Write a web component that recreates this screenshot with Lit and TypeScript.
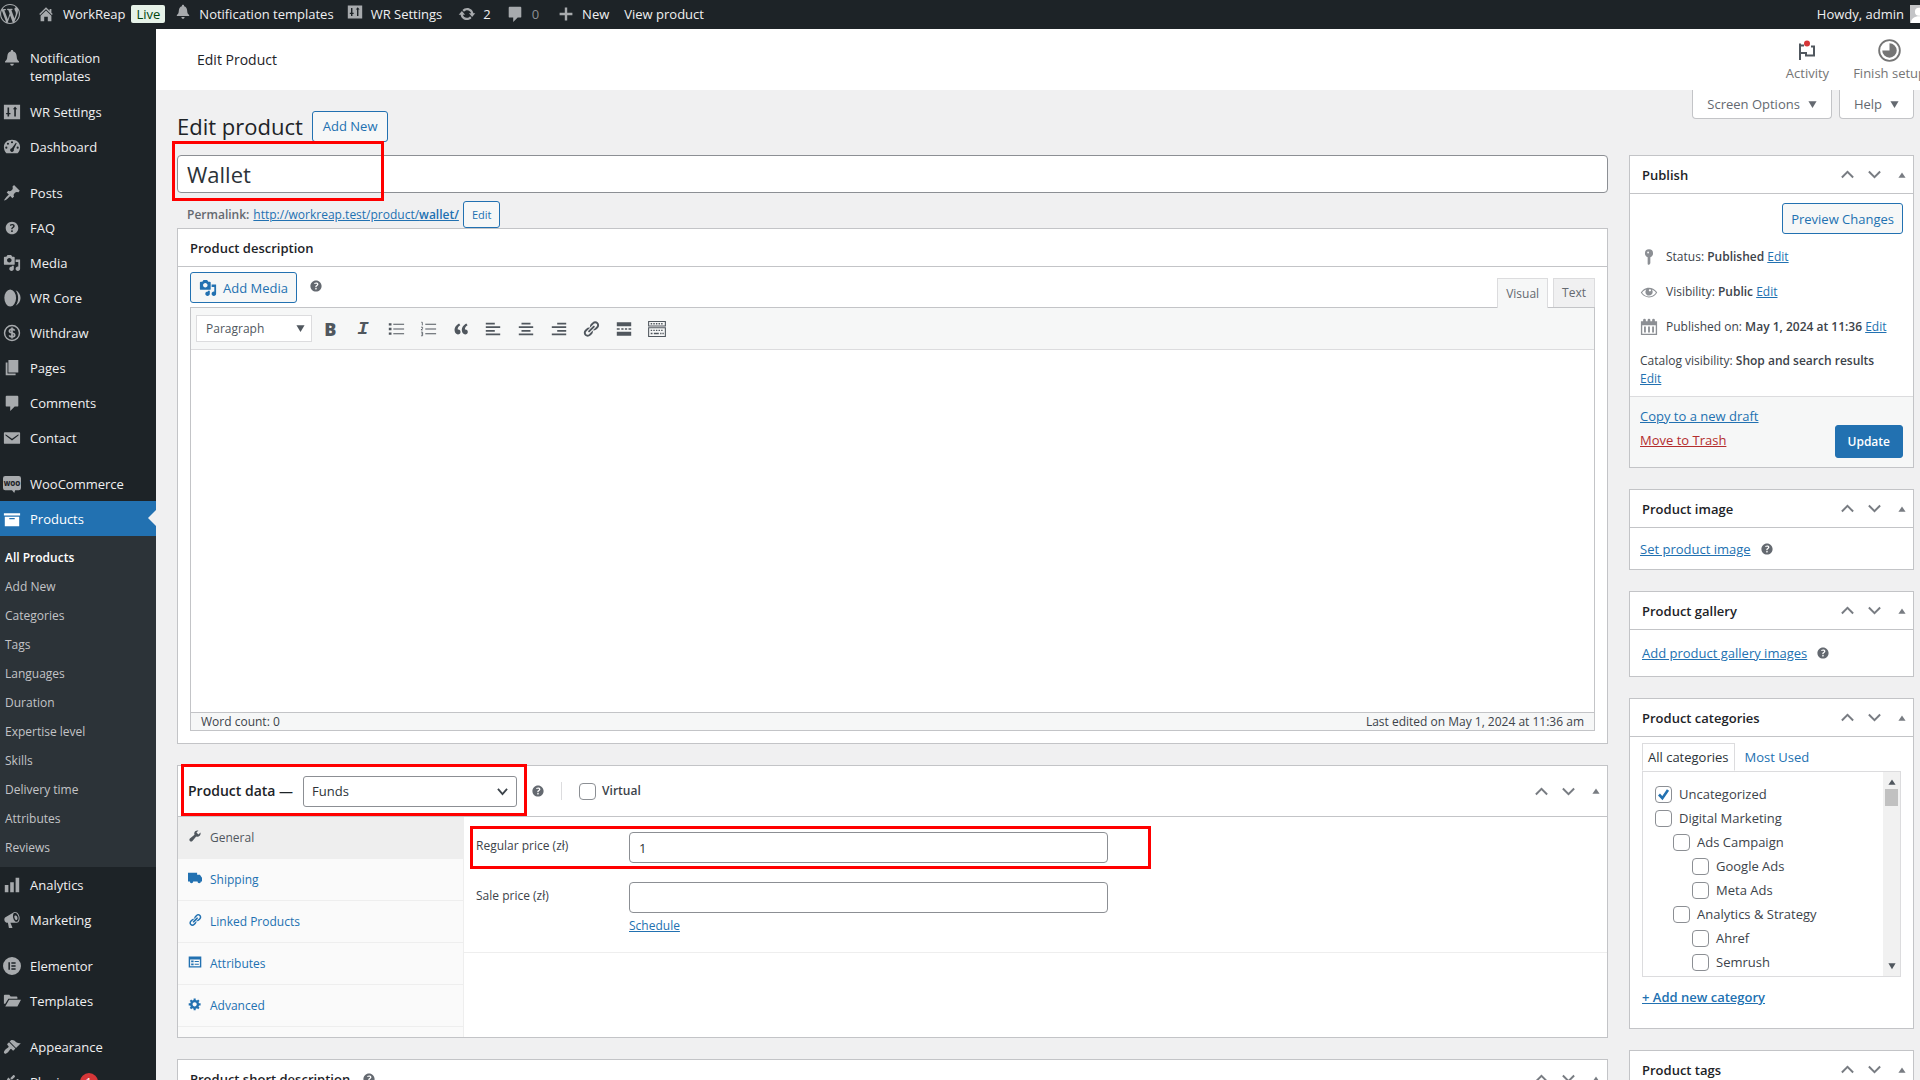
import { LitElement, html, css, svg, nothing, TemplateResult } from "lit";
import { customElement, property, state } from "lit/decorators.js";
import { classMap } from "lit/directives/class-map.js";

const ICONS: Record<string, TemplateResult | unknown> = {
  wordpress: svg`<path d="M20 10c0-5.51-4.49-10-10-10C4.48 0 0 4.49 0 10c0 5.52 4.48 10 10 10 5.51 0 10-4.48 10-10zM7.78 15.37L4.37 6.22c.55-.02 1.17-.08 1.17-.08.5-.06.44-1.13-.06-1.11 0 0-1.45.11-2.37.11-.18 0-.37 0-.58-.01C4.12 2.69 6.87 1.11 10 1.11c2.33 0 4.45.87 6.05 2.34-.68-.11-1.65.39-1.65 1.58 0 .74.45 1.36.9 2.1.35.61.55 1.36.55 2.46 0 1.49-1.4 5-1.4 5l-3.03-8.37c.54-.02.82-.17.82-.17.5-.05.44-1.25-.06-1.22 0 0-1.44.12-2.38.12-.87 0-2.33-.12-2.33-.12-.5-.03-.56 1.2-.06 1.22l.92.08 1.26 3.41zM17.41 10c.24-.64.74-1.87.43-4.25.7 1.29 1.05 2.71 1.05 4.25 0 3.29-1.73 6.24-4.4 7.78.97-2.59 1.94-5.2 2.92-7.78zM6.1 18.09C3.12 16.65 1.11 13.53 1.11 10c0-1.3.23-2.48.72-3.59C3.25 10.3 4.67 14.2 6.1 18.09zm4.03-6.63l2.58 6.98c-.86.29-1.76.45-2.71.45-.79 0-1.57-.11-2.29-.33.81-2.38 1.62-4.74 2.42-7.1z"/>`,
  home: svg`<path d="M16 8.5l1.53 1.53-1.06 1.06L10 4.6l-6.47 6.47-1.06-1.06L10 2.5l4 4v-2h2v4zm-6-2.46l6 5.99V18h-4v-5H8v5H4v-5.97z"/>`,
  bell: svg`<path d="M10 1c.8 0 1.4.6 1.4 1.4v.5c2.3.6 3.6 2.5 3.8 5.1.2 3.2.9 4.6 2.5 5.7V15H2.3v-1.3c1.6-1.1 2.3-2.5 2.5-5.7.2-2.6 1.5-4.5 3.8-5.1v-.5C8.6 1.6 9.2 1 10 1zM8 16.300h4c0 1.300-.8 2.200-2 2.200s-2-.9-2-2.200z"/>`,
  sliders: svg`<path fill-rule="evenodd" d="M1 2h18v16H1zM5 5v6H3.500v1.500H5V15h1.800v-2.500h1.500V11H6.800V5zm7.500 0v2H11l2.400-3 2.400 3h-1.500v8h-1.800z"/>`,
  update: svg`<path d="M10.2 3.28c3.53 0 6.43 2.61 6.92 6h2.08l-3.5 4-3.5-4h2.32c-.45-1.97-2.21-3.45-4.32-3.45-1.45 0-2.73.71-3.54 1.78L4.95 5.66C6.23 4.2 8.11 3.28 10.2 3.28zm-.4 13.44c-3.52 0-6.43-2.61-6.92-6H.8l3.5-4c1.17 1.33 2.33 2.67 3.5 4H5.48c.45 1.97 2.21 3.45 4.32 3.45 1.45 0 2.73-.71 3.54-1.78l1.71 1.95c-1.28 1.46-3.15 2.38-5.25 2.38z"/>`,
  comment: svg`<path d="M4 2h12c.6 0 1 .4 1 1v10c0 .6-.4 1-1 1h-3l-5 5v-5H4c-.6 0-1-.4-1-1V3c0-.6.4-1 1-1z"/>`,
  plus: svg`<path d="M18 8.500v3h-6.500V18h-3v-6.500H2v-3h6.500V2h3v6.500z"/>`,
  gauge: svg`<path fill-rule="evenodd" d="M3.760 17h12.480C17.960 15.210 19 12.790 19 10.120 19 5 15 2 10 2S1 5 1 10.120C1 12.790 2.040 15.210 3.760 17zM10 3.500a1.200 1.200 0 1 1 0 2.400 1.200 1.200 0 0 1 0-2.400zM5.500 5.200a1.200 1.200 0 1 1 0 2.400 1.200 1.200 0 0 1 0-2.400zM14.300 5.200l.9.7-3.200 6.700c.5 1.500-.5 2.900-2 2.900s-2.500-1.500-1.900-2.900c.3-.8.9-1.200 1.700-1.300zM3.700 9.500a1.200 1.200 0 1 1 0 2.400 1.200 1.200 0 0 1 0-2.400zM16.300 9.500a1.200 1.200 0 1 1 0 2.400 1.200 1.200 0 0 1 0-2.400z"/>`,
  pin: svg`<path d="M10.44 3.02l1.82-1.82 6.36 6.35-1.83 1.82c-1.05-.68-2.48-.57-3.41.36l-.75.75c-.92.93-1.04 2.35-.35 3.41l-1.83 1.82-2.41-2.41-2.8 2.79c-.42.42-3.38 2.71-3.8 2.29s1.86-3.39 2.28-3.81l2.79-2.79L4.1 9.36l1.83-1.82c1.05.69 2.48.57 3.4-.36l.75-.75c.93-.92 1.05-2.35.36-3.41z"/>`,
  help: svg`<path d="M17 10c0-3.87-3.14-7-7-7-3.87 0-7 3.13-7 7s3.13 7 7 7c3.86 0 7-3.13 7-7zm-6.3 1.48H9.14v-.43c0-.38.08-.7.24-.98s.46-.57.88-.89c.41-.29.68-.53.81-.71.14-.18.2-.39.2-.62 0-.25-.09-.44-.28-.58-.19-.13-.45-.19-.79-.19-.58 0-1.25.19-2 .57l-.64-1.28c.87-.49 1.8-.74 2.77-.74.81 0 1.45.2 1.92.58.48.39.71.91.71 1.55 0 .43-.09.8-.29 1.11-.19.32-.57.67-1.11 1.06-.38.28-.61.49-.71.63-.1.15-.15.34-.15.57v.35zm-1.47 2.74c-.18-.17-.27-.42-.27-.73 0-.33.08-.58.26-.75s.43-.25.77-.25c.32 0 .57.09.75.26s.27.42.27.74c0 .3-.09.55-.27.72-.18.18-.43.27-.75.27-.33 0-.58-.09-.76-.26z"/>`,
  media: svg`<path d="M13 11V4c0-.55-.45-1-1-1h-1.67L9 1H5L3.67 3H2c-.55 0-1 .45-1 1v7c0 .55.45 1 1 1h10c.55 0 1-.45 1-1zM7 4.5c1.38 0 2.5 1.12 2.5 2.5S8.38 9.5 7 9.5 4.5 8.38 4.5 7 5.62 4.5 7 4.5zM14 6h5v10.5c0 1.38-1.12 2.5-2.5 2.5S14 17.88 14 16.5s1.12-2.5 2.5-2.5c.17 0 .34.02.5.05V9h-3V6zm-4 8.05V13h2v3.5c0 1.38-1.12 2.5-2.5 2.5S7 17.88 7 16.5 8.12 14 9.5 14c.17 0 .34.02.5.05z"/>`,
  core: svg`<ellipse cx="8" cy="10" rx="6.500" ry="9.500"/><path d="M14 1.500c3.500 1.500 5.500 5 5.500 8.500s-2 7-5.500 8.500c2-2.500 2.800-5.500 2.800-8.500s-.8-6-2.800-8.500z"/>`,
  dollar: svg`<circle cx="10" cy="10" r="8.300" fill="none" stroke="currentColor" stroke-width="1.600"/><path d="M12.900 7.300c-.5-1-1.500-1.500-2.900-1.500-1.600 0-2.900.7-2.900 2s1.200 1.800 2.900 2.200 3 .9 3 2.200-1.300 2.100-3 2.100c-1.500 0-2.600-.6-3.100-1.700M10 3.800v12.400" fill="none" stroke="currentColor" stroke-width="1.900"/>`,
  pages: svg`<path d="M6 15V1h11v14H6zm-1 1h9v2H3V4h2v12z"/>`,
  mail: svg`<path d="M2 3.500h16c.6 0 1 .4 1 1v11c0 .6-.4 1-1 1H2c-.6 0-1-.4-1-1v-11c0-.6.4-1 1-1zm.8 2.200v1.600l7.200 5.500 7.200-5.500V5.700L10 10.800z"/>`,
  woo: svg`<path d="M2.500 1h15A2.500 2.500 0 0 1 20 3.500v11a2.500 2.500 0 0 1-2.500 2.500H13.500l-1 3-2.500-3h-7.500A2.500 2.500 0 0 1 0 14.500v-11A2.500 2.500 0 0 1 2.500 1z"/><text x="10" y="12" text-anchor="middle" font-size="7" font-weight="800" fill="#1d2327">WOO</text>`,
  archive: svg`<path d="M19 3.500v2.500H1V3.500zM2 7.500h16V18H2zm11 2.700V9H7v1.200z"/>`,
  chart: svg`<path d="M18 18V2h-4v16h4zm-6 0V7H8v11h4zm-6 0v-8H2v8h4z"/>`,
  megaphone: svg`<path fill-rule="evenodd" d="M18.15 5.94c.46 1.62.38 3.22-.02 4.48-.42 1.28-1.26 2.18-2.3 2.48-.16.06-.26.06-.4.06h-7.200l2.22 5.500c.02.14-.06.26-.14.34-.08.1-.24.16-.34.16H6.950c-.1 0-.26-.06-.34-.16-.08-.08-.16-.2-.14-.34l-1-5.500H4.250c-.5.06-1.080-.18-1.540-.62s-.88-1.080-1.060-1.880c-.24-.8-.2-1.560-.02-2.200.18-.62.58-1.080 1.060-1.300l9.020-5.420c.1-.06.18-.1.24-.16.220-.160.500-.240.740-.300 1.040-.3 2.240.1 3.220.98s1.840 2.240 2.260 3.860zm-2.580 5.980c.4-.1.74-.34 1.040-.7.58-.7.86-1.760.86-3.040 0-.64-.1-1.300-.28-1.980-.34-1.360-1.020-2.500-1.780-3.240s-1.680-1.100-2.460-.88c-.82.22-1.400.96-1.700 2-.32 1.040-.28 2.360.06 3.720.38 1.360 1 2.500 1.800 3.240.78.74 1.600 1.100 2.460.88zM13.500 5c1.200-.3 2.200.8 2.500 2.100.3 1.200 0 2.600-1.100 2.900s-1.800-1.200-2.100-2.400-.4-2.300.7-2.600z"/>`,
  elementor: svg`<path fill-rule="evenodd" d="M10 0a10 10 0 1 0 0 20 10 10 0 0 0 0-20zM6 5.800h1.700v8.400H6zM9.300 5.800H14v1.700H9.300zM9.300 9.200H14v1.700H9.300zM9.300 12.500H14v1.700H9.300z"/>`,
  folder: svg`<path d="M1 4c0-.6.4-1 1-1h5l1.500 2H15c.6 0 1 .4 1 1v1.500H6L2.500 13H1zM6.800 8.600H20L16 16H2.500z"/>`,
  brush: svg`<path d="M14.48 11.06L7.41 3.99l1.5-1.5c.5-.56 2.3-.47 3.51.32 1.21.8 1.43 1.28 2.91 2.1 1.18.64 2.45 1.26 4.45.85zm-.71.71L6.7 4.7 4.93 6.47c-.39.39-.39 1.02 0 1.41l1.06 1.06c.39.39.39 1.03 0 1.42-.6.6-1.43 1.11-2.21 1.69-.35.26-.7.53-1.01.84C1.43 14.23.4 16.08 1.4 17.07c.99 1 2.84-.03 4.18-1.36.31-.31.58-.66.85-1.02.57-.78 1.08-1.61 1.69-2.21.39-.39 1.02-.39 1.41 0l1.06 1.06c.39.39 1.02.39 1.41 0z"/>`,
  plug: svg`<path d="M13.110 4.360L9.870 7.600 8 5.730l3.240-3.240c.35-.34 1.050-.2 1.560.32.52.51.66 1.210.31 1.550zM5.100 6.100l.9-1.100 9 9-1.200.9c-2 1.700-5 1.700-7 .3L3 19l-1.500-1.500L5 14c-1.500-2.200-1.600-5.600.1-7.900zm12.400 2.600l-3.200 3.200-1.900-1.800 3.300-3.300c.3-.3 1-.2 1.500.3s.7 1.200.3 1.600z"/>`,
  wrench: svg`<path d="M16.68 9.77c-1.34 1.34-3.3 1.67-4.95.99l-5.41 6.52c-.99.99-2.59.99-3.58 0s-.99-2.59 0-3.57l6.52-5.42c-.68-1.65-.35-3.61.99-4.95 1.28-1.28 3.12-1.62 4.72-1.06l-2.89 2.89 2.82 2.82 2.86-2.87c.53 1.58.18 3.39-1.08 4.65z"/>`,
  truck: svg`<path d="M0 2.500h13v3h4L20 9.500V15h-1.600a2.400 2.400 0 0 1-4.800 0H7.400a2.400 2.400 0 0 1-4.800 0H0z"/>`,
  link: svg`<path d="M17.74 2.76c1.68 1.69 1.68 4.41 0 6.1l-1.53 1.52c-1.12 1.12-2.7 1.47-4.14 1.09l2.62-2.61.76-.77.76-.76c.84-.84.84-2.2 0-3.04-.84-.85-2.2-.85-3.04 0l-.77.76-3.38 3.38c-.37-1.44-.02-3.02 1.1-4.14l1.52-1.53c1.69-1.68 4.42-1.68 6.1 0zM8.59 13.43l5.34-5.34c.42-.42.42-1.1 0-1.52-.44-.43-1.13-.39-1.53 0l-5.33 5.34c-.42.42-.42 1.1 0 1.52.44.43 1.13.39 1.52 0zm-.76 2.29l4.14-4.15c.38 1.44.03 3.02-1.09 4.14l-1.52 1.53c-1.69 1.68-4.41 1.68-6.1 0-1.68-1.68-1.68-4.42 0-6.1l1.53-1.52c1.12-1.12 2.7-1.47 4.14-1.1l-4.14 4.15c-.85.84-.85 2.2 0 3.05.84.84 2.2.84 3.04 0z"/>`,
  list: svg`<path fill-rule="evenodd" d="M1 2h18v16H1zM3 6.500v9.500h14V6.500zM4.500 8H8v2.500H4.500zM4.500 12H8v2.500H4.500zM9.500 8.500h6V10h-6zM9.500 12.500h6V14h-6z"/>`,
  gear: svg`<path d="M18 12h-2.18c-.17.7-.44 1.35-.81 1.93l1.54 1.54-2.1 2.1-1.54-1.54c-.58.36-1.23.63-1.91.79V19H8v-2.18c-.68-.16-1.33-.43-1.91-.79l-1.54 1.54-2.12-2.12 1.54-1.54c-.36-.58-.63-1.23-.79-1.91H1V9.03h2.17c.16-.7.44-1.35.8-1.94L2.43 5.55l2.1-2.1 1.54 1.54c.58-.37 1.24-.64 1.93-.81V2h3v2.18c.68.16 1.33.43 1.91.79l1.54-1.54 2.12 2.12-1.54 1.54c.36.59.64 1.24.8 1.94H18V12zm-8.5 1.5c1.66 0 3-1.34 3-3s-1.34-3-3-3-3 1.34-3 3 1.34 3 3 3z"/>`,
  status: svg`<path fill-rule="evenodd" d="M14.500 6c0 2-1.200 3.600-3 4.200V17L10 19l-1.500-1V10.200C6.700 9.600 5.500 8 5.500 6a4.500 4.500 0 0 1 9 0zM8 5c0 .6.400 1 1 1s1-.4 1-1-.4-1-1-1-1 .4-1 1z"/>`,
  eye: svg`<path d="M18.300 9.500C15 4.900 8.500 3.800 3.900 7.200c-1.200.9-2.200 2.100-3 3.400.2.4.5.8.8 1.200 3.300 4.600 9.600 5.600 14.200 2.400.9-.7 1.700-1.400 2.400-2.400.3-.4.5-.8.8-1.200-.3-.4-.5-.8-.8-1.100zm-8.200-2.300c.5-.5 1.300-.5 1.800 0s.5 1.300 0 1.800-1.300.5-1.800 0-.5-1.300 0-1.800zm-.1 7.700c-3.100 0-6-1.600-7.700-4.200C3.500 9 5.100 7.800 7 7.200c-.7.8-1 1.700-1 2.700 0 2.200 1.700 4.100 4 4.100 2.200 0 4.100-1.700 4.100-4v-.1c0-1-.4-2-1.100-2.700 1.900.6 3.500 1.800 4.700 3.500-1.700 2.600-4.600 4.200-7.700 4.200z"/>`,
  calendar: svg`<path fill-rule="evenodd" d="M1 3.500h2.500V2.200a1.500 1.500 0 0 1 3 0v1.300h2V2.200a1.500 1.500 0 0 1 3 0v1.300h2V2.200a1.500 1.500 0 0 1 3 0v1.300H19V19H1zM2.500 8v9.500h15V8zM4.500 9.500h2V16h-2zM9 9.500h2V16H9zM13.500 9.500h2V16h-2z"/>`,
  ul: svg`<path d="M2 3.500h3v2.600H2zM2 8.700h3v2.600H2zM2 13.900h3v2.600H2zM7 4.200h12v1.200H7zM7 9.400h12v1.200H7zM7 14.600h12v1.200H7z"/>`,
  ol: svg`<path d="M7 4.200h12v1.200H7zM7 9.400h12v1.200H7zM7 14.600h12v1.200H7z"/><path d="M2.500 2.500h1.200v3.500M2.200 8h1.800v1.500l-1.800 1.500h2M2.200 13.500h1.800v4H2.200M2.500 15.500H4" fill="none" stroke="currentColor" stroke-width=".9"/>`,
  quote: svg`<path d="M9.49 13.22c0-.74-.2-1.38-.61-1.9-.62-.78-1.83-.88-2.53-.72-.29-1.65 1.11-3.75 2.92-4.65L7.88 4c-2.73 1.3-5.42 4.28-4.96 8.05C3.21 14.43 4.59 16 6.54 16c.85 0 1.56-.25 2.12-.75s.83-1.18.83-2.03zm8.05 0c0-.74-.2-1.38-.61-1.9-.63-.78-1.83-.88-2.53-.72-.29-1.65 1.11-3.75 2.92-4.65L15.93 4c-2.73 1.3-5.41 4.28-4.95 8.05.29 2.38 1.66 3.95 3.61 3.95.85 0 1.56-.25 2.12-.75s.83-1.18.83-2.03z"/>`,
  left: svg`<path d="M2 3h10v2H2zM2 7h16v2H2zM2 11h10v2H2zM2 15h16v2H2z"/>`,
  center: svg`<path d="M5 3h10v2H5zM2 7h16v2H2zM5 11h10v2H5zM2 15h16v2H2z"/>`,
  right: svg`<path d="M8 3h10v2H8zM2 7h16v2H2zM8 11h10v2H8zM2 15h16v2H2z"/>`,
  more: svg`<path d="M2 2.500h16V7H2zM2 13h16v4.500H2zM2 9.200h3.200v1.600H2zM7 9.200h2.500v1.600H7zM11 9.200h2.500v1.600H11zM15 9.200h3v1.600h-3z"/>`,
  keyboard: svg`<path d="M.7 1.700h18.600v5H.7zM.7 8.700h18.600v9.600H.7z" fill="none" stroke="currentColor" stroke-width="1.200"/><path d="M3 4.200h14M3 11.500h14" fill="none" stroke="currentColor" stroke-width="1.600" stroke-dasharray="1.600 1.300"/><path d="M3 15h2M6.500 15h5.500M13.500 15h1.500M16 15h1.500" stroke="currentColor" stroke-width="1.800"/>`,
  up: svg`<path d="M2.500 14l7.500-7.500 7.500 7.500" fill="none" stroke="currentColor" stroke-width="2.600"/>`,
  down: svg`<path d="M2.500 6l7.500 7.500L17.500 6" fill="none" stroke="currentColor" stroke-width="2.600"/>`,
  toggle: svg`<path d="M1 17L10 4l9 13z"/>`,
  caret: svg`<path d="M1 3h18l-9 15z"/>`,
  chevron: svg`<path d="M3 6l7 8 7-8" fill="none" stroke="currentColor" stroke-width="2.800"/>`,
  flag: svg`<path d="M3 19.500V3M3 12.500h6V15h8V6h-3M3 5h4" fill="none" stroke="currentColor" stroke-width="2"/><circle cx="10" cy="3" r="3" fill="#d63638"/>`,
  progress: svg`<circle cx="10" cy="10" r="9" fill="none" stroke="currentColor" stroke-width="1.600"/><path d="M10 3.700A6.300 6.300 0 1 1 3.700 10H10z"/>`,
  person: svg`<rect width="20" height="20" fill="#c3c4c7"/><circle cx="10" cy="7.500" r="4.500" fill="#fff"/><path d="M1 20c0-5 4-7.500 9-7.500s9 2.500 9 7.500z" fill="#fff"/>`,
};

@customElement("wp-icon")
export class WpIcon extends LitElement {
  @property() name = "";
  static styles = css`
    :host { display: inline-flex; flex: none; width: 18px; height: 18px; }
    .glyph { display: block; width: 100%; height: 100%; fill: currentColor; font-family: "Open Sans", sans-serif; }
  `;
  render() {
    return html`<svg class="glyph" viewBox="0 0 20 20" aria-hidden="true">${ICONS[this.name]}</svg>`;
  }
}

interface MenuEntry { icon: string; label: string; gap?: boolean; badge?: number; }

const MENU_TOP: MenuEntry[] = [
  { icon: "bell", label: "Notification templates" },
  { icon: "sliders", label: "WR Settings" },
  { icon: "gauge", label: "Dashboard" },
  { icon: "pin", label: "Posts", gap: true },
  { icon: "help", label: "FAQ" },
  { icon: "media", label: "Media" },
  { icon: "core", label: "WR Core" },
  { icon: "dollar", label: "Withdraw" },
  { icon: "pages", label: "Pages" },
  { icon: "comment", label: "Comments" },
  { icon: "mail", label: "Contact" },
  { icon: "woo", label: "WooCommerce", gap: true },
  { icon: "archive", label: "Products" },
];
const SUBMENU = ["All Products", "Add New", "Categories", "Tags", "Languages", "Duration", "Expertise level", "Skills", "Delivery time", "Attributes", "Reviews"];
const MENU_BOTTOM: MenuEntry[] = [
  { icon: "chart", label: "Analytics" },
  { icon: "megaphone", label: "Marketing" },
  { icon: "elementor", label: "Elementor", gap: true },
  { icon: "folder", label: "Templates" },
  { icon: "brush", label: "Appearance", gap: true },
  { icon: "plug", label: "Plugins", badge: 1 },
];
const DATA_TABS = [
  { icon: "wrench", label: "General" },
  { icon: "truck", label: "Shipping" },
  { icon: "link", label: "Linked Products" },
  { icon: "list", label: "Attributes" },
  { icon: "gear", label: "Advanced" },
];
const TOOLS = [
  ["ul", "Bulleted list"], ["ol", "Numbered list"], ["quote", "Blockquote"], ["left", "Align left"], ["center", "Align center"],
  ["right", "Align right"], ["link", "Insert link"], ["more", "Read more tag"], ["keyboard", "Toolbar toggle"],
];
const CATEGORIES = [
  { label: "Uncategorized", level: 0, checked: true },
  { label: "Digital Marketing", level: 0 },
  { label: "Ads Campaign", level: 1 },
  { label: "Google Ads", level: 2 },
  { label: "Meta Ads", level: 2 },
  { label: "Analytics & Strategy", level: 1 },
  { label: "Ahref", level: 2 },
  { label: "Semrush", level: 2 },
];

@customElement("app-root")
export class AppRoot extends LitElement {
  @state() private tab = "General";

  static styles = css`
    :host {
      display: flex; flex-direction: column; height: 100vh; overflow: hidden;
      background: #f0f0f1; color: #3c434a;
      font: 13px/18px "Open Sans", "Noto Sans", sans-serif;
    }
    * { box-sizing: border-box; }
    h1, h2, ul, p { margin: 0; padding: 0; font-size: inherit; font-weight: inherit; }
    ul { list-style: none; }
    a { color: #2271b1; }
    button, input, select { font: inherit; color: inherit; margin: 0; }
    button { padding: 0; border: 0; background: none; cursor: pointer; }
    strong { font-weight: 600; }

    .bar { display: flex; align-items: center; flex: none; height: 29px; background: #1d2327; color: #f0f0f1; padding: 0 0 2px 0; white-space: nowrap; }
    .bar a { display: flex; align-items: center; color: inherit; text-decoration: none; }
    .bar wp-icon { color: #a7aaad; }
    .bar .i20 { width: 20px; height: 20px; }
    .bar .i16 { width: 16px; height: 16px; }
    .bar .lift { width: 16px; height: 16px; margin-bottom: 4px; }
    .site { gap: 8px; margin-left: 17px; }
    .bar .live { margin-left: 6px; padding: 0 5px; border-radius: 2px; background: #e6f2e8; color: #00450c; }
    .templates { gap: 8px; margin-left: 10px; }
    .settings { gap: 8px; margin-left: 13px; }
    .updates { gap: 7px; margin-left: 16px; }
    .replies { gap: 8px; margin-left: 15px; }
    .replies span { color: #8c8f94; }
    .new { gap: 8px; margin-left: 19px; }
    .view { margin-left: 15px; }
    .howdy { gap: 6px; margin-left: auto; margin-right: -8px; }

    .shell { display: flex; flex: 1; min-height: 0; }
    .menu { flex: none; width: 156px; padding-top: 11px; background: #1d2327; overflow: hidden; }
    .menu a { text-decoration: none; }
    .item { display: flex; gap: 8px; padding: 9px 16px 8px 3px; color: #f0f0f1; }
    .item.tall { padding-bottom: 9px; }
    .item wp-icon { color: #a7aaad; margin-right: 1px; }
    .item.gap { margin-top: 11px; }
    .item.current { position: relative; background: #2271b1; color: #fff; }
    .item.current wp-icon { color: #fff; }
    .item.current::after { content: ""; position: absolute; right: 0; top: 9px; border: 8px solid transparent; border-right-color: #f0f0f1; border-left: 0; }
    .badge { min-width: 18px; height: 18px; border-radius: 9px; background: #d63638; color: #fff; font-size: 11px; text-align: center; margin-left: -2px; }
    .sub { padding: 7px 0 5px; background: #2c3338; font-size: 12px; }
    .sub a { display: block; padding: 6px 5px 5px; color: #c3c4c7; }
    .sub a.on { color: #fff; font-weight: 600; }

    .content { display: flex; flex-direction: column; flex: 1; min-width: 0; }
    .head { display: flex; flex: none; align-items: center; height: 61px; padding-left: 41px; background: #fff; overflow: hidden; }
    .head h1 { font-size: 14px; font-weight: 500; color: #1d2327; }
    .acts { display: flex; gap: 24px; margin-left: auto; margin-right: -6px; }
    .act { display: flex; flex-direction: column; align-items: center; gap: 2px; padding-top: 2px; color: #757575; white-space: nowrap; }
    .act wp-icon { width: 23px; height: 23px; }
    .act .flag { width: 20px; color: #50575e; }

    .page { display: grid; grid-template-columns: minmax(0, 1fr) 285px; column-gap: 21px; padding: 0 6px 0 21px; }
    .screen { grid-column: 1 / -1; display: flex; justify-content: flex-end; gap: 7px; height: 21px; }
    .screen button { display: flex; align-items: center; flex: none; gap: 8px; height: 29px; padding: 0 14px; border: 1px solid #c3c4c7; border-top: 0; border-radius: 0 0 4px 4px; background: #fff; color: #646970; }
    .screen wp-icon { width: 9px; height: 9px; }
    .heading { grid-column: 1 / -1; display: flex; align-items: center; gap: 9px; height: 30px; }
    .heading h2 { font-size: 22px; line-height: 30px; color: #1d2327; }
    .btn { height: 31px; padding: 0 10px; border: 1px solid #2271b1; border-radius: 3px; background: #f6f7f7; color: #2271b1; font-size: 13px; }
    .primary { height: 33px; padding: 0 12px; background: #2271b1; color: #fff; font-weight: 600; font-size: 12px; }
    .col { padding-top: 14px; min-width: 0; }

    .title { position: relative; }
    .field { display: block; width: 100%; height: 31px; padding: 0 9px; border: 1px solid #8c8f94; border-radius: 4px; background: #fff; color: #2c3338; }
    .title .field { height: 38px; font-size: 22px; }
    .mark { position: absolute; border: 3px solid #f00; pointer-events: none; }
    .name-mark { left: -5px; top: -14px; width: 212px; height: 60px; }
    .type-mark { left: 3px; top: -2px; width: 346px; height: 52px; }
    .price-mark { left: -6px; top: -6px; width: 681px; height: 43px; }
    .perma { display: flex; align-items: center; gap: 4px; height: 35px; padding: 8px 10px 0; color: #646970; font-size: 12px; }
    .perma .btn { height: 27px; padding: 0 8px; font-size: 11px; }

    .box { margin-bottom: 21px; border: 1px solid #c3c4c7; background: #fff; }
    .boxhead { display: flex; align-items: center; height: 38px; padding: 0 4px 0 12px; border-bottom: 1px solid #c3c4c7; }
    .boxhead h2 { font-weight: 600; color: #1d2327; white-space: nowrap; }
    .boxhead > h2 + .tip { margin-left: 11px; }
    .order { display: flex; align-items: center; gap: 12px; margin-left: auto; color: #787c82; }
    .order button { display: flex; justify-content: center; width: 15px; }
    .order wp-icon { width: 15px; height: 15px; }
    .order .tri { width: 8px; height: 8px; }
    .tip { width: 16px; height: 16px; color: #646970; }

    .desc { padding: 5px 12px 12px; }
    .above { display: flex; align-items: flex-start; height: 35px; }
    .above .btn { display: flex; align-items: center; gap: 6px; padding: 0 8px; }
    .above .tip { margin: 6px 11px; }
    .modes { display: flex; gap: 5px; margin-left: auto; align-self: flex-end; }
    .modes button { height: 29px; padding: 0 8px; border: 1px solid #dcdcde; border-bottom: 0; background: #f0f0f1; color: #646970; font-size: 12px; }
    .modes .on { position: relative; height: 30px; margin-bottom: -1px; background: #f6f7f7; }
    .editor { border: 1px solid #c3c4c7; }
    .tools { display: flex; align-items: center; height: 42px; padding-left: 5px; border-bottom: 1px solid #dcdcde; background: #f6f7f7; color: #50575e; }
    .drop { position: relative; display: flex; align-items: center; }
    .drop select { width: 100%; appearance: none; background: #fff; }
    .drop wp-icon { position: absolute; right: 7px; width: 9px; height: 9px; pointer-events: none; }
    .format { width: 116px; }
    .format select { height: 27px; padding: 0 9px; border: 1px solid #dcdcde; font-size: 12px; }
    .buttons { display: grid; grid-template-columns: repeat(11, 1fr); width: 359px; margin-left: 2px; }
    .buttons button { display: flex; justify-content: center; align-items: center; height: 26px; }
    .bold { font-size: 18px; font-weight: 800; }
    .italic { font: italic 700 19px "Liberation Mono", monospace; }
    .canvas { height: 362px; outline: 0; }
    .status { display: flex; justify-content: space-between; align-items: center; height: 18px; padding: 0 10px; border-top: 1px solid #c3c4c7; background: #f6f7f7; font-size: 12px; }

    .data { position: relative; }
    .data .boxhead { height: 51px; padding-left: 10px; }
    .data .boxhead h2 { font-size: 14px; }
    .type { width: 214px; margin: 0 13px 0 10px; }
    .type select { height: 31px; padding: 0 8px; border: 1px solid #8c8f94; border-radius: 3px; font-weight: 500; color: #2c3338; }
    .type wp-icon { right: 8px; width: 13px; height: 13px; }
    .data .tip { margin-right: 15px; }
    .virtual { display: flex; align-items: center; gap: 6px; padding-left: 17px; border-left: 1px solid #dcdcde; font-size: 12px; font-weight: 600; }
    .check { appearance: none; flex: none; width: 17px; height: 17px; border: 1px solid #8c8f94; border-radius: 4px; background: #fff; }
    .check:checked { background: #fff url("data:image/svg+xml,%3Csvg xmlns='http://www.w3.org/2000/svg' viewBox='0 0 20 20'%3E%3Cpath d='M4 10l4.500 5L16 4' fill='none' stroke='%232271b1' stroke-width='3.500'/%3E%3C/svg%3E") center / 15px no-repeat; }
    .split { display: grid; grid-template-columns: 286px minmax(0, 1fr); }
    .tabs { padding-bottom: 10px; border-right: 1px solid #eee; background: #fafafa; }
    .tabs button { display: flex; align-items: center; gap: 8px; width: 100%; height: 42px; padding-left: 10px; border-bottom: 1px solid #eee; color: #2271b1; font-size: 12px; }
    .tabs wp-icon { width: 14px; height: 14px; margin-bottom: 3px; }
    .tabs .on { background: #eee; color: #50575e; }
    .prices { padding: 15px 12px 0; height: 136px; border-bottom: 1px solid #eee; }
    .price { position: relative; display: grid; grid-template-columns: 153px 479px; margin-bottom: 19px; }
    .price label { padding-top: 5px; font-size: 12px; }
    .price a { grid-column: 2; margin-top: 4px; font-size: 12px; justify-self: start; }

    .pub { padding: 9px 10px 0; font-size: 12px; }
    .pub .btn { display: block; margin: 0 0 14px auto; padding: 0 8px; }
    .row { display: flex; align-items: center; gap: 8px; height: 18px; margin-bottom: 17px; white-space: nowrap; }
    .row wp-icon { color: #8c8f94; }
    .catalog { padding: 0 20px 8px 0; margin-top: -1px; }
    .major { display: flex; align-items: flex-end; justify-content: space-between; padding: 10px 10px 9px; height: 71px; border-top: 1px solid #dcdcde; background: #f6f7f7; }
    .links { display: grid; gap: 6px; align-self: flex-start; }
    .trash { color: #b32d2e; }
    .linkrow { display: flex; align-items: center; gap: 8px; height: 41px; padding: 0 10px; }
    .linkrow.roomy { height: 46px; padding: 0 12px; }
    .cats { padding: 6px 12px 22px; }
    .cattabs { display: flex; }
    .cattabs a { height: 28px; padding: 4px 5px; border: 1px solid transparent; text-decoration: none; }
    .cattabs .on { margin-bottom: -1px; border-color: #dcdcde; border-bottom-color: #fff; background: #fff; color: #2c3338; position: relative; }
    .cattabs a + a { margin-left: 4px; }
    .panel { display: flex; height: 206px; border: 1px solid #dcdcde; overflow: hidden; }
    .panel ul { flex: 1; padding: 10px 12px 0; }
    .panel label { display: flex; align-items: center; gap: 7px; height: 24px; }
    .l1 { padding-left: 18px; }
    .l2 { padding-left: 37px; }
    .scroll { display: flex; flex-direction: column; align-items: center; width: 17px; padding: 6px 0; background: #f1f1f1; color: #50575e; }
    .scroll wp-icon { width: 8px; height: 8px; }
    .scroll .grip { width: 13px; height: 17px; margin: 3px 0 auto; background: #c1c1c1; }
    .addcat { display: block; margin-top: 11px; font-weight: 600; }
  `;

  private entry(m: MenuEntry) {
    const cls = { item: true, gap: !!m.gap, tall: m.icon === "bell", current: m.label === "Products" };
    return html`<li><a href="#" class=${classMap(cls)}><wp-icon name=${m.icon}></wp-icon><span>${m.label}</span>
      ${m.badge ? html`<span class="badge">${m.badge}</span>` : nothing}</a></li>`;
  }

  private order() {
    return html`<div class="order">
      <button aria-label="Move up"><wp-icon name="up"></wp-icon></button>
      <button aria-label="Move down"><wp-icon name="down"></wp-icon></button>
      <button aria-label="Toggle panel"><wp-icon class="tri" name="toggle"></wp-icon></button>
    </div>`;
  }

  private box(title: string, body: unknown) {
    return html`<section class="box"><div class="boxhead"><h2>${title}</h2>${this.order()}</div>${body}</section>`;
  }

  private tip() {
    return html`<wp-icon class="tip" name="help"></wp-icon>`;
  }

  render() {
    return html`
      <nav class="bar" aria-label="Toolbar">
        <a href="#" aria-label="About WordPress"><wp-icon class="i20" name="wordpress"></wp-icon></a>
        <a href="#" class="site"><wp-icon name="home"></wp-icon>WorkReap</a>
        <a href="#" class="live">Live</a>
        <a href="#" class="templates"><wp-icon class="lift" name="bell"></wp-icon>Notification templates</a>
        <a href="#" class="settings"><wp-icon class="lift" name="sliders"></wp-icon>WR Settings</a>
        <a href="#" class="updates"><wp-icon name="update"></wp-icon>2</a>
        <a href="#" class="replies"><wp-icon name="comment"></wp-icon><span>0</span></a>
        <a href="#" class="new"><wp-icon class="i16" name="plus"></wp-icon>New</a>
        <a href="#" class="view">View product</a>
        <a href="#" class="howdy">Howdy, admin<wp-icon name="person"></wp-icon></a>
      </nav>
      <div class="shell">
        <nav class="menu" aria-label="Main menu">
          <ul>${MENU_TOP.map((m) => this.entry(m))}</ul>
          <ul class="sub">${SUBMENU.map((s, i) => html`<li><a href="#" class=${i ? "" : "on"}>${s}</a></li>`)}</ul>
          <ul>${MENU_BOTTOM.map((m) => this.entry(m))}</ul>
        </nav>
        <main class="content">
          <header class="head">
            <h1>Edit Product</h1>
            <div class="acts">
              <button class="act"><wp-icon class="flag" name="flag"></wp-icon>Activity</button>
              <button class="act"><wp-icon name="progress"></wp-icon>Finish setup</button>
            </div>
          </header>
          <div class="page">
            <div class="screen">
              <button>Screen Options<wp-icon name="caret"></wp-icon></button>
              <button>Help<wp-icon name="caret"></wp-icon></button>
            </div>
            <div class="heading"><h2>Edit product</h2><button class="btn">Add New</button></div>
            <div class="col">${this.mainColumn()}</div>
            <div class="col">${this.sideColumn()}</div>
          </div>
        </main>
      </div>
    `;
  }

  private mainColumn() {
    return html`
      <div class="title">
        <input class="field" type="text" aria-label="Product name" .value=${"Wallet"} />
        <div class="mark name-mark"></div>
      </div>
      <div class="perma"><strong>Permalink:</strong>
        <a href="#">http://workreap.test/product/<strong>wallet/</strong></a><button class="btn">Edit</button></div>
      <section class="box">
        <div class="boxhead"><h2>Product description</h2></div>
        <div class="desc">
          <div class="above">
            <button class="btn"><wp-icon name="media"></wp-icon>Add Media</button>${this.tip()}
            <div class="modes"><button class="on">Visual</button><button>Text</button></div>
          </div>
          <div class="editor">
            <div class="tools">
              <div class="drop format"><select aria-label="Text format"><option>Paragraph</option></select><wp-icon name="caret"></wp-icon></div>
              <div class="buttons">
                <button class="bold" aria-label="Bold">B</button><button class="italic" aria-label="Italic">I</button>
                ${TOOLS.map(([icon, label]) => html`<button aria-label=${label}><wp-icon name=${icon}></wp-icon></button>`)}
              </div>
            </div>
            <div class="canvas" contenteditable="true" role="textbox" aria-label="Product description"></div>
            <div class="status"><span>Word count: 0</span><span>Last edited on May 1, 2024 at 11:36 am</span></div>
          </div>
        </div>
      </section>
      <section class="box data">
        <div class="boxhead">
          <h2><label for="product-type">Product data —</label></h2>
          <div class="drop type"><select id="product-type"><option>Funds</option></select><wp-icon name="chevron"></wp-icon></div>
          ${this.tip()}
          <label class="virtual"><input class="check" type="checkbox" />Virtual</label>
          ${this.order()}
        </div>
        <div class="mark type-mark"></div>
        <div class="split">
          <div class="tabs">
            ${DATA_TABS.map((t) => html`<button class=${t.label === this.tab ? "on" : ""} @click=${() => (this.tab = t.label)}><wp-icon name=${t.icon}></wp-icon>${t.label}</button>`)}
          </div>
          <div>
            <div class="prices">
              <div class="price"><label for="regular">Regular price (zł)</label><input id="regular" class="field" type="text" .value=${"1"} /><div class="mark price-mark"></div></div>
              <div class="price"><label for="sale">Sale price (zł)</label><input id="sale" class="field" type="text" /><a href="#">Schedule</a></div>
            </div>
          </div>
        </div>
      </section>
      <section class="box">
        <div class="boxhead"><h2>Product short description</h2>${this.tip()}${this.order()}</div>
      </section>
    `;
  }

  private sideColumn() {
    return html`
      ${this.box("Publish", html`
        <div class="pub">
          <button class="btn">Preview Changes</button>
          <div class="row"><wp-icon name="status"></wp-icon><span>Status: <strong>Published</strong> <a href="#">Edit</a></span></div>
          <div class="row"><wp-icon name="eye"></wp-icon><span>Visibility: <strong>Public</strong> <a href="#">Edit</a></span></div>
          <div class="row"><wp-icon name="calendar"></wp-icon><span>Published on: <strong>May 1, 2024 at 11:36</strong> <a href="#">Edit</a></span></div>
          <p class="catalog">Catalog visibility: <strong>Shop and search results</strong> <a href="#">Edit</a></p>
        </div>
        <div class="major">
          <div class="links"><a href="#">Copy to a new draft</a><a href="#" class="trash">Move to Trash</a></div>
          <button class="btn primary">Update</button>
        </div>`)}
      ${this.box("Product image", html`<div class="linkrow"><a href="#">Set product image</a>${this.tip()}</div>`)}
      ${this.box("Product gallery", html`<div class="linkrow roomy"><a href="#">Add product gallery images</a>${this.tip()}</div>`)}
      ${this.box("Product categories", html`
        <div class="cats">
          <div class="cattabs"><a href="#" class="on">All categories</a><a href="#">Most Used</a></div>
          <div class="panel">
            <ul>${CATEGORIES.map((c) => html`<li class=${"l" + c.level}><label><input class="check" type="checkbox" ?checked=${!!c.checked} />${c.label}</label></li>`)}</ul>
            <div class="scroll"><wp-icon name="toggle"></wp-icon><div class="grip"></div><wp-icon name="caret"></wp-icon></div>
          </div>
          <a href="#" class="addcat">+ Add new category</a>
        </div>`)}
      ${this.box("Product tags", nothing)}
    `;
  }
}
